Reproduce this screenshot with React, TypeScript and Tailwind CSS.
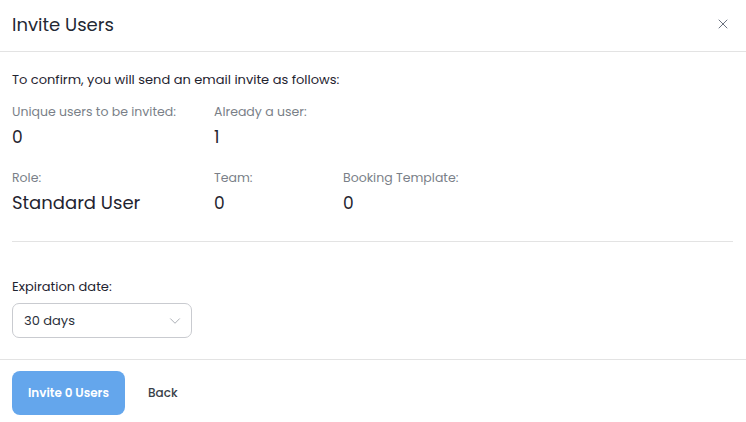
import { X, ChevronDown } from "lucide-react";

const resumo = [
  [
    { rotulo: "Unique users to be invited:", valor: "0" },
    { rotulo: "Already a user:", valor: "1" },
  ],
  [
    { rotulo: "Role:", valor: "Standard User" },
    { rotulo: "Team:", valor: "0" },
    { rotulo: "Booking Template:", valor: "0" },
  ],
];

export default function App() {
  return (
    <div
      className="w-[746px] h-[422px] bg-white text-[#1f2430] overflow-hidden"
      style={{ fontFamily: "Poppins, Inter, 'Noto Sans', sans-serif" }}
    >
      {/* cabeçalho */}
      <header className="h-[52px] flex items-center justify-between pl-3 pr-4 border-b border-[#e3e3e3]">
        <h1 className="text-[18px] font-normal text-[#232833] -mt-[2px]">Invite Users</h1>
        <X size={16} strokeWidth={1.5} className="text-[#6b7280] -mt-[3px] mr-[-1px]" />
      </header>

      <main className="px-3 pt-[18px]">
        <p className="text-[13px] text-[#1f2430] leading-5">
          To confirm, you will send an email invite as follows:
        </p>

        <div className="mt-[12px] flex flex-col gap-[18px]">
          {resumo.map((linha, i) => (
            <div key={i} className="flex">
              {linha.map((item, j) => (
                <div key={j} className={j === 0 ? "w-[202px]" : j === 1 ? "w-[129px]" : ""}>
                  <p className="text-[12.5px] text-[#7a7f88] leading-5">{item.rotulo}</p>
                  <p
                    className={`${
                      item.valor === "Standard User" ? "text-[18px]" : "text-[17px]"
                    } text-[#1f2430] leading-[26px] mt-[2px]`}
                  >
                    {item.valor}
                  </p>
                </div>
              ))}
            </div>
          ))}
        </div>

        <div className="mt-[25px] mr-[1px] border-t border-[#e3e3e3]" />

        <p className="mt-[35px] text-[13px] text-[#1f2430] leading-5">Expiration date:</p>
        <div className="mt-[6px] w-[180px] h-[35px] border border-[#c9cbd0] rounded-[7px] flex items-center justify-between pl-[11px] pr-[7px]">
          <span className="text-[13px] text-[#2b303a]">30 days</span>
          <ChevronDown size={18} strokeWidth={1.2} className="text-[#a3a7ae]" />
        </div>
      </main>

      {/* rodapé */}
      <footer className="mt-[21px] border-t border-[#e3e3e3] px-3 pt-[11px] flex items-center gap-6">
        <button className="w-[113px] h-[44px] rounded-[8px] bg-[#64a6ec] text-white text-[12px] font-semibold">
          Invite 0 Users
        </button>
        <button className="text-[12px] text-[#3a3f48] font-medium -ml-[1px]">Back</button>
      </footer>
    </div>
  );
}
